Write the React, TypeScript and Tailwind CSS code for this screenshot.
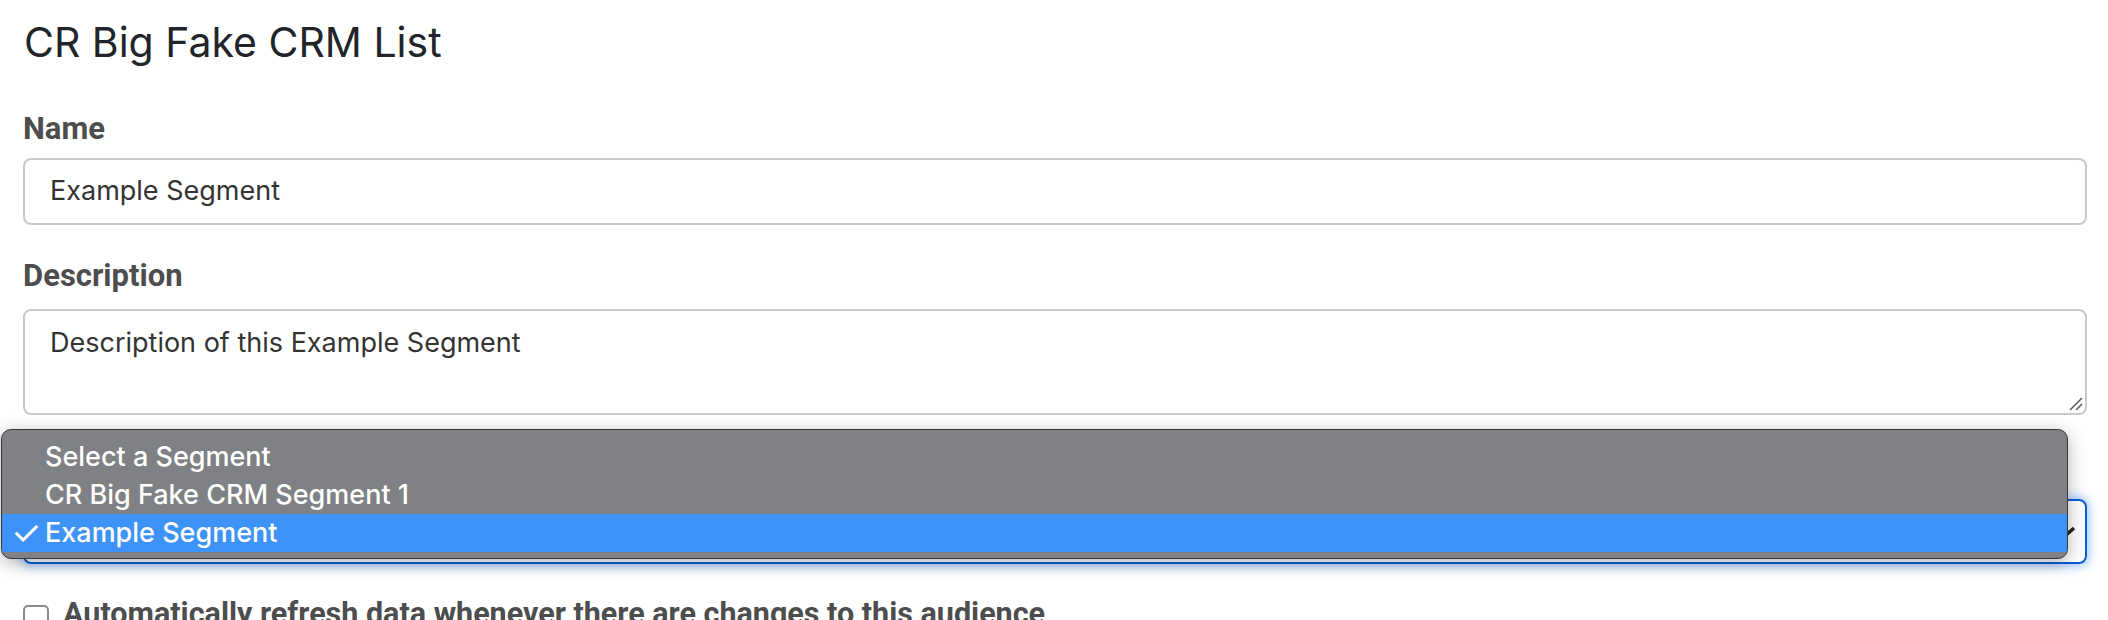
export default function App() {
  const options = [
    { label: "Select a Segment", selected: false },
    { label: "CR Big Fake CRM Segment 1", selected: false },
    { label: "Example Segment", selected: true },
  ];

  return (
    <div className="min-h-screen bg-white overflow-hidden">
      <div className="pl-[23px] pr-[21px] pt-[18px]">
        <h1 className="font-['Inter',sans-serif] text-[41px] leading-[49px] text-[#212529] pl-[1px]">
          CR Big Fake CRM List
        </h1>

        <div className="mt-[44px]">
          <label className="block font-['Roboto',sans-serif] font-bold text-[31px] leading-[36px] text-[#4d4d4d]">
            Name
          </label>
          <div className="mt-[11px] h-[67px] border-2 border-[#c9c9c9] rounded-[8px] flex items-center pl-[25px] font-['Inter',sans-serif] text-[27px] text-[#333]">
            Example Segment
          </div>
        </div>

        <div className="mt-[33px]">
          <label className="block font-['Roboto',sans-serif] font-bold text-[31px] leading-[36px] text-[#4d4d4d]">
            Description
          </label>
          <div className="relative mt-[15px] h-[106px] border-2 border-[#c9c9c9] rounded-[8px] pl-[25px] pt-[14px] font-['Inter',sans-serif] text-[27px] leading-[36px] text-[#333]">
            Description of this Example Segment
            <svg className="absolute right-[2px] bottom-[2px]" width="16" height="16" viewBox="0 0 16 16">
              <path d="M3 15 L15 3" stroke="#555" strokeWidth="1.5" />
              <path d="M9 15 L15 9" stroke="#555" strokeWidth="1.5" />
            </svg>
          </div>
        </div>

        {/* segment select, with its native option list open over it */}
        <div className="relative mt-[33px]">
          <div className="h-[36px]" />
          <div className="mt-[15px] h-[65px] border-2 border-[#0b5ed7] rounded-[8px] shadow-[0_0_10px_3px_rgba(13,110,253,0.35)] flex items-center justify-end pr-[8px]">
            <svg width="24" height="16" viewBox="0 0 24 16">
              <path d="M3 4 L12 12 L21 4" stroke="#222" strokeWidth="3.5" fill="none" />
            </svg>
          </div>

          <div className="absolute left-[-22px] top-[-19px] w-[2067px] h-[130px] bg-[#808184] border border-[#3a3a3a] rounded-[10px] shadow-[0_4px_18px_rgba(0,0,0,0.3)] pt-[8px] overflow-hidden font-['Inter',sans-serif] font-medium text-[27px] text-white">
            {options.map((o) => (
              <div
                key={o.label}
                className={
                  o.selected
                    ? "h-[38px] flex items-center bg-[#3d93f8]"
                    : "h-[38px] flex items-center"
                }
              >
                <span className="w-[43px] pl-[9px] text-[34px] leading-[38px] font-normal">{o.selected ? "✓" : ""}</span>
                <span>{o.label}</span>
              </div>
            ))}
          </div>
        </div>

        <div className="mt-[32px] flex items-start gap-[14px]">
          <div className="w-[26px] h-[26px] border-2 border-[#8a8a8a] rounded-[5px] mt-[9px] bg-white shrink-0" />
          <span className="font-['Roboto',sans-serif] font-bold text-[30.5px] leading-[36px] text-[#4d4d4d]">
            Automatically refresh data whenever there are changes to this audience
          </span>
        </div>
      </div>
    </div>
  );
}
